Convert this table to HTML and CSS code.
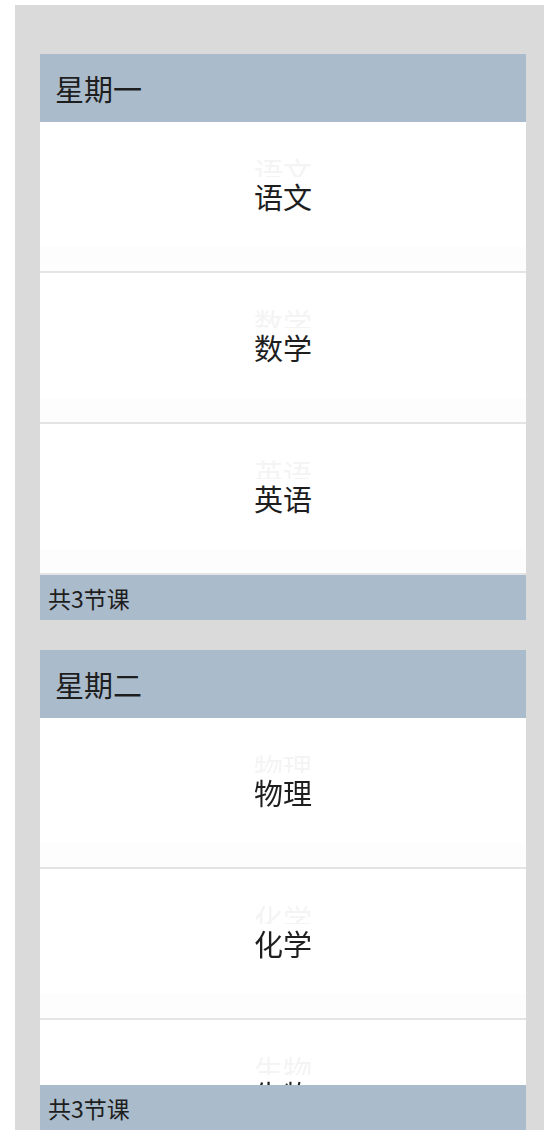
FILE: index.html
```html
<!DOCTYPE html>
<html lang="zh-CN">
<head>
    <meta charset="UTF-8">
    <meta name="viewport" content="width=device-width, initial-scale=1.0">
    <title>课程表</title>
    <link rel="stylesheet" href="styles.css">
</head>
<body>
    <div class="page">
        <div class="day">
            <div class="day-title">星期一</div>
            <div class="lesson"><span class="lesson-name" data-name="语文">语文</span></div>
            <div class="lesson"><span class="lesson-name" data-name="数学">数学</span></div>
            <div class="lesson"><span class="lesson-name" data-name="英语">英语</span></div>
            <div class="day-footer">共3节课</div>
        </div>

        <div class="day">
            <div class="day-title">星期二</div>
            <div class="lesson"><span class="lesson-name" data-name="物理">物理</span></div>
            <div class="lesson"><span class="lesson-name" data-name="化学">化学</span></div>
            <div class="lesson"><span class="lesson-name" data-name="生物">生物</span></div>
            <div class="day-footer">共3节课</div>
        </div>
    </div>
</body>
</html>
```

FILE: styles.css
```css
* {
    margin: 0;
    padding: 0;
    box-sizing: border-box;
}

html, body {
    height: 100%;
    overflow: hidden;
}

body {
    font-family: "Noto Sans CJK SC", "Liberation Sans", sans-serif;
    color: #1e1e1e;
    background: #fff;
}

.page {
    margin: 5px 0 0 15px;
    padding: 49px 18px 0 25px;
    background-color: #dadada;
    height: 1125px;
    overflow: hidden;
}

.day {
    background: #fff;
    margin-bottom: 30px;
}

.day-title {
    height: 68px;
    display: flex;
    align-items: center;
    padding-left: 15px;
    font-size: 29px;
    background-color: #aabbcb;
}

.lesson {
    height: 151px;
    display: flex;
    align-items: center;
    justify-content: center;
    border-bottom: 2px solid #e4e4e4;
    background: linear-gradient(#fff 125px, #fdfdfd 125px);
}

.lesson-name {
    position: relative;
    z-index: 0;
    font-size: 29px;
    line-height: 38px;
    padding-bottom: 2px;
}

/* reflexo apagado acima do nome */
.lesson-name::before {
    content: attr(data-name);
    position: absolute;
    left: 0;
    top: -25px;
    color: #f4f4f4;
    z-index: -1;
}

.lesson-name::after {
    content: "";
    position: absolute;
    left: -4px;
    right: -4px;
    top: 0;
    bottom: 0;
    background: #fff;
    z-index: -1;
}

.day-footer {
    position: sticky;
    bottom: 0;
    height: 45px;
    display: flex;
    align-items: center;
    padding-left: 8px;
    font-size: 23px;
    background-color: #aabbcb;
}
```
